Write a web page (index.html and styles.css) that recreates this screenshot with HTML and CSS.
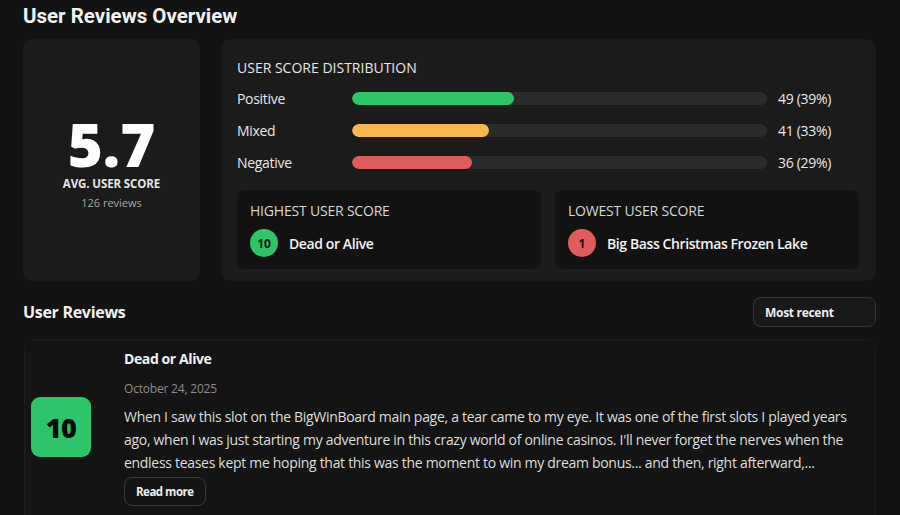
FILE: index.html
```html
<!DOCTYPE html>
<html lang="en">
<head>
<meta charset="utf-8">
<link rel="stylesheet" href="styles.css">
</head>
<body>
<div class="page">
  <h1 class="title">User Reviews Overview</h1>
  <div class="overview">
    <div class="card avg">
      <div class="avg-num">5.7</div>
      <div class="avg-label">AVG. USER SCORE</div>
      <div class="avg-count">126 reviews</div>
    </div>
    <div class="card dist">
      <div class="dist-title">USER SCORE DISTRIBUTION</div>
      <div class="rows">
        <div class="row"><span class="row-label">Positive</span><div class="track"><div class="fill green" style="width:39%"></div></div><span class="row-val">49 (39%)</span></div>
        <div class="row"><span class="row-label">Mixed</span><div class="track"><div class="fill yellow" style="width:33%"></div></div><span class="row-val">41 (33%)</span></div>
        <div class="row"><span class="row-label">Negative</span><div class="track"><div class="fill red" style="width:29%"></div></div><span class="row-val">36 (29%)</span></div>
      </div>
      <div class="extremes">
        <div class="ext">
          <div class="ext-title">HIGHEST USER SCORE</div>
          <div class="ext-item"><span class="badge green">10</span><span class="ext-name">Dead or Alive</span></div>
        </div>
        <div class="ext">
          <div class="ext-title">LOWEST USER SCORE</div>
          <div class="ext-item"><span class="badge red">1</span><span class="ext-name">Big Bass Christmas Frozen Lake</span></div>
        </div>
      </div>
    </div>
  </div>
  <div class="reviews-head">
    <h2 class="sub">User Reviews</h2>
    <div class="select">Most recent</div>
  </div>
  <div class="review">
    <div class="score-col"><div class="score">10</div></div>
    <div class="review-body">
      <div class="review-game">Dead or Alive</div>
      <div class="review-date">October 24, 2025</div>
      <p class="review-text">When I saw this slot on the BigWinBoard main page, a tear came to my eye. It was one of the first slots I played years ago, when I was just starting my adventure in this crazy world of online casinos. I'll never forget the nerves when the endless teases kept me hoping that this was the moment to win my dream bonus... and then, right afterward,...</p>
      <button class="read-more">Read more</button>
    </div>
  </div>
</div>
</body>
</html>
```

FILE: styles.css
```css
* { box-sizing: border-box; }
html, body { margin: 0; padding: 0; background: #131313; overflow: hidden; }
body { font-family: "Open Sans", "Noto Sans", sans-serif; color: #eaeaea; }
.page { padding: 4px 24px 0 23px; width: 900px; }
.title { font-family: Roboto, sans-serif; font-weight: 700; font-size: 20.5px; line-height: 24px; margin: 0 0 11px 0; color: #f2f2f2; }
.overview { display: flex; gap: 21px; height: 242px; }
.card { background: #1b1b1b; border-radius: 10px; }
.avg { width: 177px; display: flex; flex-direction: column; align-items: center; justify-content: center; padding-top: 8px; }
.avg-num { font-weight: 800; font-size: 60px; line-height: 54px; color: #fff; }
.avg-label { font-weight: 700; font-size: 11.5px; line-height: 14px; margin-top: 6px; color: #e6e6e6; letter-spacing: -0.1px; }
.avg-count { font-size: 11px; line-height: 16px; color: #a8a8a8; margin-top: 4px; }
.dist { flex: 1; padding: 19px 17px 13px 16px; display: flex; flex-direction: column; }
.dist-title { font-size: 14px; line-height: 20px; color: #e8e8e8; }
.rows { display: flex; flex-direction: column; gap: 12px; margin-top: 10px; }
.row { display: flex; align-items: center; height: 20px; font-size: 14px; letter-spacing: -0.3px; }
.row-label { width: 115px; color: #e8e8e8; }
.track { flex: 1; height: 13px; border-radius: 7px; background: #2b2b2b; overflow: hidden; }
.fill { height: 100%; border-radius: 7px; }
.green { background: #2cc56a; }
.yellow { background: #f7b84f; }
.red { background: #e05b5b; }
.row-val { width: 92px; padding-left: 11px; color: #e8e8e8; }
.extremes { display: flex; gap: 14px; margin-top: 18px; flex: 1; }
.ext { flex: 1; background: #121212; border-radius: 8px; padding: 12px 13px; }
.ext-title { font-size: 14px; line-height: 18px; color: #d6d6d6; letter-spacing: -0.2px; }
.ext-item { display: flex; align-items: center; gap: 11px; margin-top: 9px; }
.badge { width: 28px; height: 28px; border-radius: 50%; display: flex; align-items: center; justify-content: center; font-size: 12px; font-weight: 700; color: #111; }
.ext-name { font-size: 14px; font-weight: 600; color: #f2f2f2; letter-spacing: -0.4px; }
.reviews-head { display: flex; justify-content: space-between; align-items: center; margin-top: 16px; height: 30px; }
.sub { font-size: 16px; font-weight: 700; margin: 0; color: #f2f2f2; letter-spacing: -0.3px; }
.select { width: 123px; height: 30px; border: 1px solid #353535; border-radius: 8px; background: #181818; font-size: 12px; font-weight: 700; padding: 0 11px; display: flex; align-items: center; color: #eee; letter-spacing: -0.3px; }
.review { margin-top: 12px; margin-left: 1px; border: 1px solid #1d1d1d; border-radius: 10px; display: flex; background: #141414; height: 190px; }
.score-col { width: 99px; display: flex; align-items: flex-start; padding: 57px 0 0 6px; }
.score { width: 60px; height: 60px; border-radius: 9px; background: #2cc56a; color: #0a0a0a; font-weight: 800; font-size: 27px; display: flex; align-items: center; justify-content: center; letter-spacing: -0.5px; }
.review-body { flex: 1; padding: 9px 20px 0 0; }
.review-game { font-size: 14px; font-weight: 700; line-height: 20px; color: #f2f2f2; letter-spacing: -0.4px; }
.review-date { font-size: 12px; color: #8c8c8c; margin-top: 11px; line-height: 18px; letter-spacing: -0.2px; }
.review-text { font-size: 14px; line-height: 23px; margin: 7px 0 0 0; color: #dedede; letter-spacing: -0.3px; }
.read-more { margin-top: 3px; height: 29px; padding: 0 11px; border: 1px solid #3a3a3a; border-radius: 8px; background: #141414; color: #eee; font-family: inherit; font-size: 11.5px; font-weight: 700; letter-spacing: -0.5px; }
```
